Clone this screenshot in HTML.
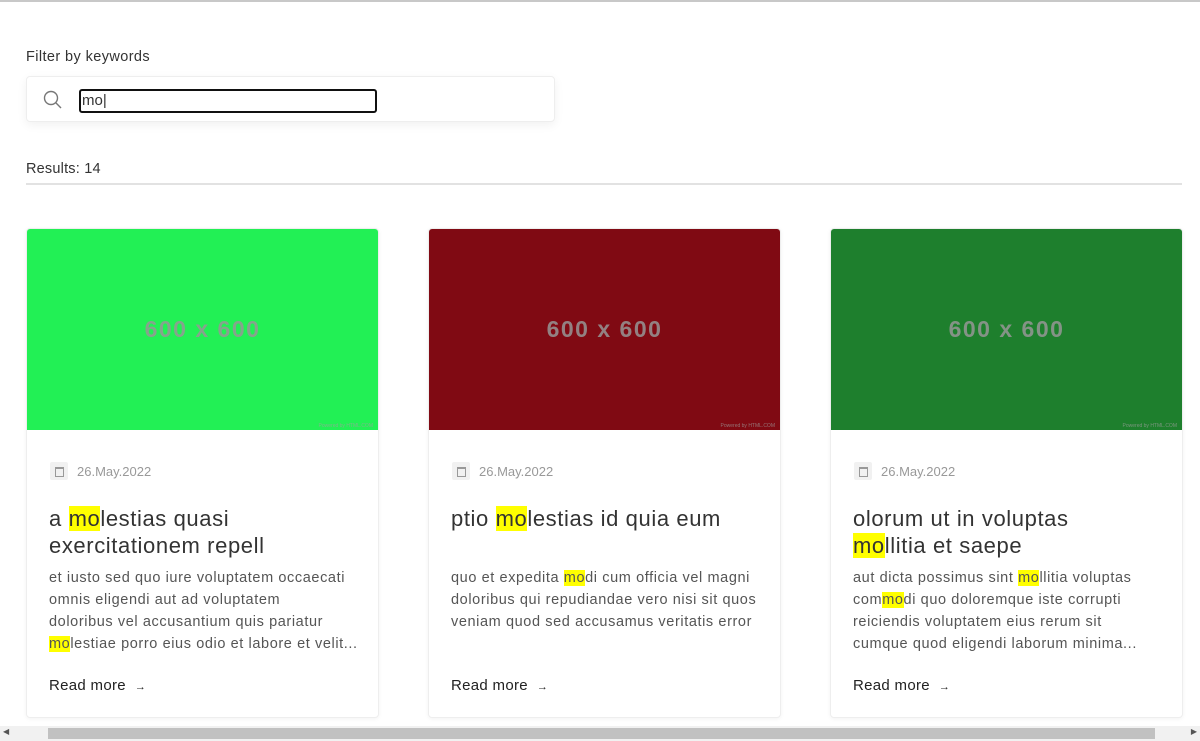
<!DOCTYPE html>
<html><head><meta charset="utf-8"><style>
*{box-sizing:border-box;margin:0;padding:0}
body{width:1200px;height:741px;overflow:hidden;background:#fff;font-family:"Liberation Sans",sans-serif;color:#333;position:relative}
.top{position:absolute;left:0;top:0;width:1200px;height:2px;background:#c8c8c8}
.lbl{position:absolute;left:26px;top:49px;font-size:14.5px;color:#333;letter-spacing:.4px}
.sbox{position:absolute;left:26px;top:76px;width:529px;height:46px;border:1px solid #eee;border-radius:4px;box-shadow:0 3px 10px rgba(0,0,0,.06);background:#fff}
.inp{position:absolute;left:52px;top:12px;width:298px;height:24px;border:2px solid #111;border-radius:3px;font-size:15px;padding-left:1px;line-height:20px}
.res{position:absolute;left:26px;top:161px;font-size:14.5px;letter-spacing:.2px}
.hr{position:absolute;left:26px;top:183px;width:1156px;height:2px;background:#e2e2e2}
.card{position:absolute;top:228px;width:353px;height:490px;border:1px solid #eee;border-radius:4px;box-shadow:0 1px 4px rgba(0,0,0,.05);overflow:hidden;background:#fff}
.img{margin:-1px -1px 0;height:202px;display:flex;align-items:center;justify-content:center;font-size:23px;color:rgba(150,150,150,.85);font-weight:bold;letter-spacing:1.5px;position:relative}
.img small{position:absolute;right:6px;bottom:1px;font-size:5px;color:rgba(160,160,160,.7);letter-spacing:0;font-weight:normal}
.date{position:absolute;left:23px;top:233px;font-size:13px;color:#999;display:flex;align-items:center}
.ic{width:18px;height:18px;background:#f1f1f1;border-radius:2px;margin-right:9px;position:relative}
.ic:after{content:"";position:absolute;left:5px;top:5px;width:7px;height:7px;border:1px solid #999;border-top-width:2px}
.ttl{position:absolute;left:22px;top:276px;width:320px;font-size:22px;line-height:27px;color:#333;letter-spacing:.6px;white-space:nowrap}
.txt{position:absolute;left:22px;top:338px;font-size:14.5px;line-height:22px;color:#555;letter-spacing:.6px;white-space:nowrap}
.rm{position:absolute;left:22px;top:448px;font-size:15px;color:#222;letter-spacing:.3px}
.rm span{font-size:11px}
mark{background:#ffff00;color:inherit}
.sb{position:absolute;left:0;top:726px;width:1200px;height:15px;background:#f1f1f1}
.th{position:absolute;left:48px;top:2px;width:1107px;height:11px;background:#c1c1c1}
</style></head><body>
<div class="top"></div>
<div class="lbl">Filter by keywords</div>
<div class="sbox">
<svg style="position:absolute;left:16px;top:13px" width="20" height="20" viewBox="0 0 20 20"><circle cx="8" cy="8" r="6.5" fill="none" stroke="#777" stroke-width="1.4"/><line x1="12.8" y1="12.8" x2="18" y2="18" stroke="#777" stroke-width="1.4"/></svg>
<div class="inp">mo|</div></div>
<div class="res">Results: 14</div>
<div class="hr"></div>

<div class="card" style="left:26px">
<div class="img" style="background:#22f055">600 x 600<small>Powered by HTML.COM</small></div>
<div class="date"><span class="ic"></span>26.May.2022</div>
<div class="ttl">a <mark>mo</mark>lestias quasi<br>exercitationem repell</div>
<div class="txt">et iusto sed quo iure voluptatem occaecati<br>omnis eligendi aut ad voluptatem<br>doloribus vel accusantium quis pariatur<br><mark>mo</mark>lestiae porro eius odio et labore et velit...</div>
<div class="rm">Read more &nbsp;<span>→</span></div></div>

<div class="card" style="left:428px">
<div class="img" style="background:#800a13">600 x 600<small>Powered by HTML.COM</small></div>
<div class="date"><span class="ic"></span>26.May.2022</div>
<div class="ttl">ptio <mark>mo</mark>lestias id quia eum</div>
<div class="txt">quo et expedita <mark>mo</mark>di cum officia vel magni<br>doloribus qui repudiandae vero nisi sit quos<br>veniam quod sed accusamus veritatis error</div>
<div class="rm">Read more &nbsp;<span>→</span></div></div>

<div class="card" style="left:830px">
<div class="img" style="background:#1e7f2d">600 x 600<small>Powered by HTML.COM</small></div>
<div class="date"><span class="ic"></span>26.May.2022</div>
<div class="ttl">olorum ut in voluptas<br><mark>mo</mark>llitia et saepe</div>
<div class="txt">aut dicta possimus sint <mark>mo</mark>llitia voluptas<br>com<mark>mo</mark>di quo doloremque iste corrupti<br>reiciendis voluptatem eius rerum sit<br>cumque quod eligendi laborum minima...</div>
<div class="rm">Read more &nbsp;<span>→</span></div></div>

<div class="sb"><span style="position:absolute;left:3px;top:1px;font-size:8px;color:#555">◀</span><div class="th"></div><span style="position:absolute;right:3px;top:1px;font-size:8px;color:#555">▶</span></div>
</body></html>
